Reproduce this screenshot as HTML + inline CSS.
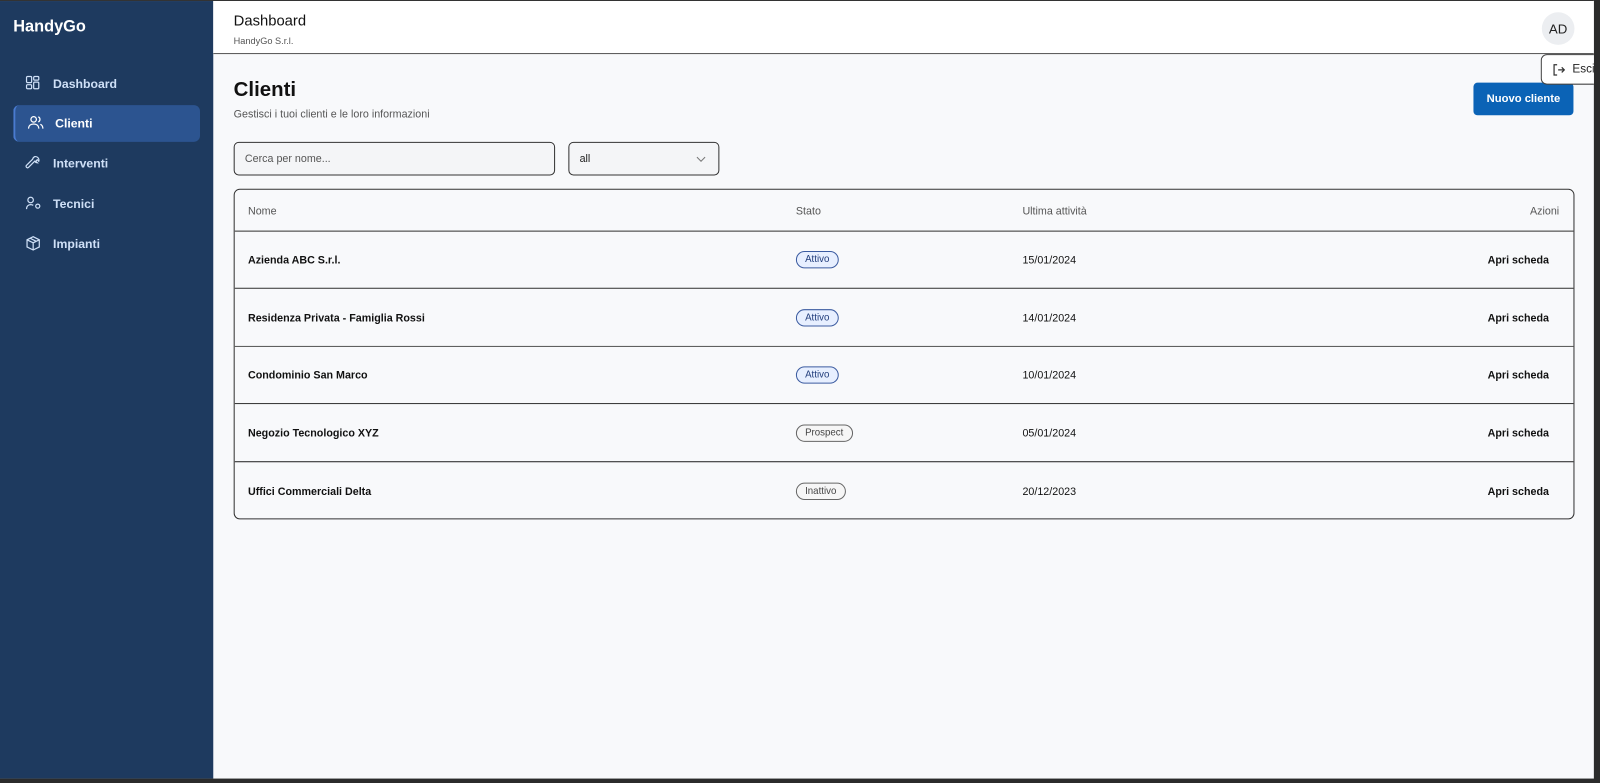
<!DOCTYPE html>
<html><head><meta charset="utf-8"><style>
*{box-sizing:border-box;margin:0;padding:0}
body{width:1600px;height:783px;overflow:hidden;background:#2b2b2b;font-family:"Liberation Sans",sans-serif;position:relative}
.wrap{position:absolute;left:0;top:0;width:1568px;height:767px;transform:scale(1.0204);transform-origin:0 0}
.app{position:absolute;left:0;top:0;width:1562px;height:763px;background:#f8f9fb;overflow:hidden;border-top:1px solid #333}
.side{position:absolute;left:0;top:0;width:209px;height:100%;background:#1e3a5f;color:#fff}
.logo{position:absolute;left:13px;top:17px;font-size:16px;font-weight:bold}
.nav{position:absolute;left:13px;width:183px;height:36px;display:flex;align-items:center;font-size:12px;font-weight:bold;color:#cfe0f7}
.nav svg{position:absolute;left:12px;top:10px}
.nav span{position:absolute;left:39px}
.nav.act{background:#2c5490;border-radius:6px;border-left:2px solid #4a7bd0;color:#fff}
.hdr{position:absolute;left:209px;top:0;right:0;height:52px;background:#fff;border-bottom:1px solid #555}
.hdr h1{position:absolute;left:20px;top:12px;font-size:14.5px;font-weight:normal;color:#111}
.hdr small{position:absolute;left:20px;top:34px;font-size:9px;color:#555}
.av{position:absolute;left:1302px;top:11px;width:32px;height:32px;border-radius:50%;background:#eceef1;font-size:13px;color:#222;display:flex;align-items:center;justify-content:center}
.pop{position:absolute;left:1510px;top:52px;width:100px;height:30px;background:#fff;border:1px solid #444;border-radius:6px;font-size:11.5px;color:#222}
.title{position:absolute;left:229px;top:76px;font-size:20px;font-weight:bold;color:#111}
.sub{position:absolute;left:229px;top:105px;font-size:10.5px;color:#555}
.btn{position:absolute;left:1444px;top:80px;width:98px;height:32px;background:#0b63b6;color:#fff;border-radius:4px;font-size:11px;font-weight:bold;display:flex;align-items:center;justify-content:center}
.inp{position:absolute;top:138px;height:33px;border:1px solid #333;border-radius:5px;background:#f4f5f7;font-size:10.5px;color:#222;padding-left:10px;display:flex;align-items:center}
.tbl{position:absolute;left:229px;top:184px;width:1314px;height:324px;border:1px solid #333;border-radius:6px;overflow:hidden}
.row{position:absolute;left:0;width:100%;font-size:10.5px;color:#111}
.row div{position:absolute}
.th{color:#555;font-weight:normal}
.b{font-weight:bold}
.badge{border:1px solid #3b5ba0;background:#e7efff;color:#1f3b7a;border-radius:10px;padding:2px 8px;font-size:9.5px;top:-3px}
.badge.g{border-color:#666;background:#f6f6f6;color:#444}
</style></head><body>
<div class="wrap">
<div class="app">
<div class="side">
<div class="logo">HandyGo</div>
<div class="nav" style="top:63px"><svg width="14" height="14" viewBox="0 0 14 14" fill="none" stroke="#cfe0f7" stroke-width="1.2"><rect x="1" y="1" width="5" height="6" rx="1"/><rect x="8" y="1" width="5" height="3.5" rx="1"/><rect x="8" y="6.5" width="5" height="6.5" rx="1"/><rect x="1" y="9" width="5" height="4" rx="1"/></svg><span>Dashboard</span></div>
<div class="nav act" style="top:102px"><svg width="16" height="14" viewBox="0 0 16 14" fill="none" stroke="#fff" stroke-width="1.2"><circle cx="6" cy="4" r="2.7"/><path d="M1 13c0-3 2.2-4.5 5-4.5s5 1.5 5 4.5M10.5 1.5a2.7 2.7 0 010 5M12.5 8.8c1.5.6 2.5 2 2.5 4.2"/></svg><span>Clienti</span></div>
<div class="nav" style="top:141px"><svg width="15" height="15" viewBox="0 0 15 15" fill="none" stroke="#cfe0f7" stroke-width="1.2"><path d="M9 1.5a3.5 3.5 0 014 4.5l-1.5-1.5-1.5 1.5L11.5 7.5A3.5 3.5 0 019 6L3 12a1.4 1.4 0 01-2-2l6-6a3.5 3.5 0 012-2.5z"/></svg><span>Interventi</span></div>
<div class="nav" style="top:181px"><svg width="16" height="14" viewBox="0 0 16 14" fill="none" stroke="#cfe0f7" stroke-width="1.2"><circle cx="5" cy="4" r="2.7"/><path d="M1 13c0-3 1.8-4.5 4-4.5 1 0 2 .3 2.6.8"/><circle cx="12" cy="10" r="2"/></svg><span>Tecnici</span></div>
<div class="nav" style="top:220px"><svg width="15" height="15" viewBox="0 0 15 15" fill="none" stroke="#cfe0f7" stroke-width="1.2"><path d="M7.5 1L13.5 4v7L7.5 14 1.5 11V4z M1.5 4l6 3 6-3 M7.5 7v7 M4.5 2.5l6 3"/></svg><span>Impianti</span></div>
</div>
<div class="hdr"><h1>Dashboard</h1><small>HandyGo S.r.l.</small><div class="av">AD</div></div>
<div class="title">Clienti</div>
<div class="sub">Gestisci i tuoi clienti e le loro informazioni</div>
<div class="btn">Nuovo cliente</div>
<div class="inp" style="left:229px;width:315px;color:#555">Cerca per nome...</div>
<div class="inp" style="left:557px;width:148px">all<svg style="position:absolute;right:12px;top:13px" width="10" height="6" viewBox="0 0 10 6" fill="none" stroke="#777" stroke-width="1"><path d="M1 1l4 4 4-4"/></svg></div>
<div class="tbl">
<div class="row th" style="top:15px"><div style="left:13px">Nome</div><div style="left:550px">Stato</div><div style="left:772px">Ultima attività</div><div style="right:14px">Azioni</div></div>
<div style="position:absolute;top:40px;left:0;width:100%;border-top:1px solid #333"></div>
<div class="row" style="top:63px"><div class="b" style="left:13px">Azienda ABC S.r.l.</div><div class="badge" style="left:550px">Attivo</div><div style="left:772px">15/01/2024</div><div class="b" style="right:24px">Apri scheda</div></div>
<div style="position:absolute;top:96px;left:0;width:100%;border-top:1px solid #333"></div>
<div class="row" style="top:120px"><div class="b" style="left:13px">Residenza Privata - Famiglia Rossi</div><div class="badge" style="left:550px">Attivo</div><div style="left:772px">14/01/2024</div><div class="b" style="right:24px">Apri scheda</div></div>
<div style="position:absolute;top:153px;left:0;width:100%;border-top:1px solid #555"></div>
<div class="row" style="top:176px"><div class="b" style="left:13px">Condominio San Marco</div><div class="badge" style="left:550px">Attivo</div><div style="left:772px">10/01/2024</div><div class="b" style="right:24px">Apri scheda</div></div>
<div style="position:absolute;top:209px;left:0;width:100%;border-top:1px solid #333"></div>
<div class="row" style="top:233px"><div class="b" style="left:13px">Negozio Tecnologico XYZ</div><div class="badge g" style="left:550px">Prospect</div><div style="left:772px">05/01/2024</div><div class="b" style="right:24px">Apri scheda</div></div>
<div style="position:absolute;top:266px;left:0;width:100%;border-top:1px solid #222"></div>
<div class="row" style="top:290px"><div class="b" style="left:13px">Uffici Commerciali Delta</div><div class="badge g" style="left:550px">Inattivo</div><div style="left:772px">20/12/2023</div><div class="b" style="right:24px">Apri scheda</div></div>
</div>
<div class="pop"><svg style="position:absolute;left:10px;top:8px" width="13" height="13" viewBox="0 0 13 13" fill="none" stroke="#333" stroke-width="1.2"><path d="M5 1.5H2v10h3M6 6.5h6M9.5 4l2.5 2.5L9.5 9"/></svg><span style="position:absolute;left:30px;top:8px">Esci</span></div>
</div>
</div>
</body></html>
